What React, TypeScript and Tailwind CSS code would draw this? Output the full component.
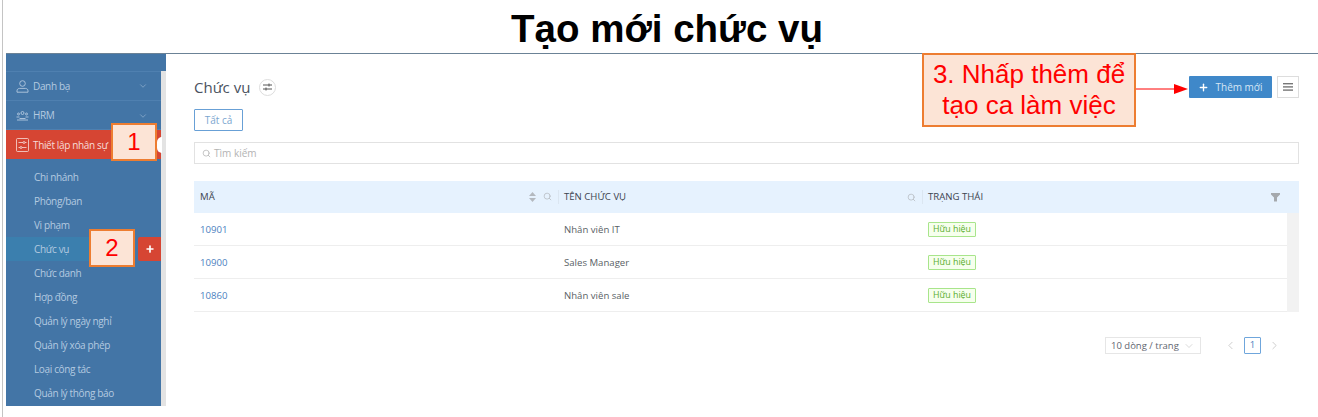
import type { ReactNode } from "react";
import { ChevronDown, ChevronLeft, ChevronRight, Plus, Search } from "lucide-react";

const subItems = ["Chi nhánh", "Phòng/ban", "Vi phạm", "Chức vụ", "Chức danh", "Hợp đồng", "Quản lý ngày nghỉ", "Quản lý xóa phép", "Loại công tác", "Quản lý thông báo"];

const rows = [
  { ma: "10901", ten: "Nhân viên IT" },
  { ma: "10900", ten: "Sales Manager" },
  { ma: "10860", ten: "Nhân viên sale" },
];

const PersonIcon = () => (
  <svg width="13" height="13" viewBox="0 0 13 13" fill="none" stroke="currentColor" strokeWidth="0.9" className="mr-[4px] shrink-0">
    <circle cx="6.5" cy="3.5" r="2.8" />
    <path d="M1 12.2v-1.4c0-1.5 1.3-2.4 2.6-2.4h5.8c1.3 0 2.6.9 2.6 2.4v1.4z" />
  </svg>
);

const GroupIcon = () => (
  <svg width="13" height="13" viewBox="0 0 13 13" fill="none" stroke="currentColor" strokeWidth="0.9" className="mr-[4px] shrink-0">
    <circle cx="6.5" cy="4" r="1.5" />
    <circle cx="2.5" cy="5" r="1" />
    <circle cx="10.5" cy="5" r="1" />
    <path d="M3.5 9.5h6M.5 8h3M9.5 8h3M1 11h11" />
  </svg>
);

const SettingIcon = () => (
  <svg width="13" height="14" viewBox="0 0 13 14" fill="none" stroke="currentColor" strokeWidth="0.8" className="mr-[4px] shrink-0">
    <rect x="0.5" y="0.5" width="12" height="13" rx="1" />
    <path d="M2.5 4.5h8M2.5 9.5h8" />
    <circle cx="8" cy="4.5" r="1" fill="#d64533" />
    <circle cx="5" cy="9.5" r="1" fill="#d64533" />
  </svg>
);

const Sidebar = () => (
  <aside className="w-[160px] h-[352px] shrink-0 flex flex-col bg-[#4375a6]">
    <div className="h-[17px] shrink-0"></div>
    <div className="flex flex-1 min-h-0">
      <div className="w-[155px] flex flex-col text-[10px] tracking-[-0.35px] text-[#b4cae0]">
        <div className="h-[30px] flex items-center pl-[10px] pr-[13px] pt-[1px] border-y border-[#4f80b0]">
          <PersonIcon />
          <span className="flex-1">Danh bạ</span>
          <ChevronDown size={10} strokeWidth={1.2} />
        </div>
        <div className="h-[30px] flex items-center pl-[10px] pr-[13px] pt-[1px] border-b border-[#4f80b0]">
          <GroupIcon />
          <span className="flex-1">HRM</span>
          <ChevronDown size={10} strokeWidth={1.2} />
        </div>
        <div className="h-[29px] flex items-center pl-[10px] pt-[1px] bg-[#d64533] text-[#f6dcd8]">
          <SettingIcon />
          <span>Thiết lập nhân sự</span>
        </div>
        <div className="pt-[6px]">
          {subItems.map((item) => (
            <div key={item} className="h-[24.1px] flex items-center justify-between">
              {item === "Chức vụ" ? (
                <>
                  <div className="w-[85px] h-full flex items-center pl-[28px] bg-[#3b7fae]">{item}</div>
                  <div className="w-[23px] h-full flex items-center justify-center bg-[#d64533] rounded-l-[2px]">
                    <Plus size={10} strokeWidth={4} className="text-white" />
                  </div>
                </>
              ) : (
                <span className="pl-[28px]">{item}</span>
              )}
            </div>
          ))}
        </div>
      </div>
      <div className="w-[5px] bg-[#e3e3e3]"></div>
    </div>
  </aside>
);

const Content = () => (
  <main className="flex-1 pl-[28px] pr-[19px] pt-[22px] text-[9.6px] text-[#5a5f66]">
    <div className="flex items-center justify-between h-[22px]">
      <div className="flex items-center gap-[9px]">
        <h2 className="text-[15px] text-[#4a5260]">Chức vụ</h2>
        <span className="w-[17px] h-[17px] rounded-full border border-[#dddddd] flex items-center justify-center">
          <svg width="9" height="8" viewBox="0 0 9 8" fill="none" stroke="#555555" strokeWidth="1">
            <path d="M0 2h9M0 6h9M6 .5v3M3 4.5v3" />
          </svg>
        </span>
      </div>
      <div className="flex items-center gap-[5px]">
        <button className="w-[83px] h-[22px] bg-[#3f88c9] text-[#d6e6f5] rounded-[1px] flex items-center justify-center gap-[6px] text-[10px]">
          <Plus size={11} strokeWidth={3} className="text-white" />
          Thêm mới
        </button>
        <button className="w-[22px] h-[22px] border border-[#dddddd] flex items-center justify-center">
          <svg width="10" height="8" viewBox="0 0 10 8" fill="#777777">
            <rect y="0" width="10" height="1.4" />
            <rect y="3.2" width="10" height="1.4" />
            <rect y="6.4" width="10" height="1.4" />
          </svg>
        </button>
      </div>
    </div>
    <button className="mt-[11px] w-[49px] h-[22px] border border-[#68a0d6] rounded-[1px] text-[10px] text-[#7ba6cf] block">Tất cả</button>
    <div className="mt-[11px] h-[22px] border border-[#e2e2e2] flex items-center pl-[7px] gap-[3px] text-[10px] text-[#b3b3b3]">
      <Search size={9} />
      Tìm kiếm
    </div>
    <table className="mt-[17px] w-full table-fixed border-separate border-spacing-0">
      <colgroup>
        <col className="w-[364px]" />
        <col className="w-[364px]" />
        <col />
        <col className="w-[12px]" />
      </colgroup>
      <thead>
        <tr className="h-[32px] bg-[#e6f2fe] text-[#3c4450] text-left">
          <th className="pl-[6px] font-normal">
            <div className="flex items-center justify-between pr-[6px]">
              MÃ
              <span className="flex items-center gap-[7px] text-[#b4b9bf]">
                <svg width="7" height="10" viewBox="0 0 7 10" fill="#b4b9bf">
                  <polygon points="3.5,0 7,4 0,4" />
                  <polygon points="0,6 7,6 3.5,10" />
                </svg>
                <Search size={9} />
              </span>
            </div>
          </th>
          <th className="font-normal">
            <div className="h-[14px] flex items-center justify-between border-l border-[#dbe6f1] pl-[5px] pr-[6px]">
              TÊN CHỨC VỤ
              <Search size={9} className="text-[#b4b9bf]" />
            </div>
          </th>
          <th colSpan={2} className="font-normal">
            <div className="h-[14px] flex items-center justify-between border-l border-[#dbe6f1] pl-[5px] pr-[19px]">
              TRẠNG THÁI
              <svg width="9" height="9" viewBox="0 0 9 9" fill="#a5a9ad">
                <polygon points="0,0 9,0 9,1.5 6,4.5 6,8.5 3,8.5 3,4.5 0,1.5" />
              </svg>
            </div>
          </th>
        </tr>
      </thead>
      <tbody>
        {rows.map((row, i) => (
          <tr key={row.ma} className="h-[33px]">
            <td className="pl-[6px] pt-[2px] text-[#4b7fc0] border-b border-[#eeeeee]">{row.ma}</td>
            <td className="pl-[6px] pt-[2px] border-b border-[#eeeeee]">{row.ten}</td>
            <td className="pl-[6px] border-b border-[#eeeeee]">
              <span className="inline-block h-[15px] px-[4px] border border-[#a8e58b] bg-[#f6ffed] text-[#58ad2c] text-[8.8px] leading-[13px] rounded-[1px]">Hữu hiệu</span>
            </td>
            {i === 0 && <td rowSpan={3} className="bg-[#f2f2f2]"></td>}
          </tr>
        ))}
      </tbody>
    </table>
    <div className="mt-[25px] flex items-center justify-end">
      <div className="w-[96px] h-[17px] border border-[#e6e6e6] flex items-center justify-between pl-[5px] pr-[5px] pt-[1px] text-[9.5px] text-[#5f6670]">
        10 dòng / trang
        <ChevronDown size={12} strokeWidth={1} className="text-[#b5b5b5]" />
      </div>
      <ChevronLeft size={13} strokeWidth={1.2} className="ml-[23px] text-[#b5b5b5]" />
      <span className="ml-[7px] w-[17px] h-[17px] border border-[#6fa6dc] rounded-[1px] flex items-center justify-center text-[#4b7fc0]">1</span>
      <ChevronRight size={13} strokeWidth={1.2} className="ml-[7px] mr-[18px] text-[#b5b5b5]" />
    </div>
  </main>
);

const Callout = ({ className, children }: { className: string; children: ReactNode }) => (
  <div className={`absolute z-10 flex items-center justify-center text-center bg-[#fce4d6] border-2 border-[#ed7d31] text-[#ff0000] font-['Liberation_Sans',sans-serif] ${className}`}>
    {children}
  </div>
);

export default function App() {
  return (
    <div className="relative w-[1318px] h-[417px] overflow-hidden bg-white font-['Open_Sans',sans-serif]">
      <div className="absolute left-[2px] top-0 bottom-0 w-px bg-[#c4c4c4]"></div>
      <h1 className="h-[53px] pl-[16px] text-center text-[38.5px] leading-[58px] font-bold text-black font-['Liberation_Sans',sans-serif]">Tạo mới chức vụ</h1>
      <div className="ml-[6px] flex border-t border-[#6b8296]">
        <Sidebar />
        <Content />
      </div>

      <Callout className="left-[111px] top-[123px] w-[46px] h-[38px] text-[24px]">1</Callout>
      <Callout className="left-[89px] top-[229px] w-[46px] h-[38px] text-[24px]">2</Callout>
      <Callout className="left-[922px] top-[53px] w-[214px] h-[74px] text-[26px] leading-[31px]">
        3. Nhấp thêm để<br />tạo ca làm việc
      </Callout>
      <svg className="absolute left-[1136px] top-[83px]" width="52" height="12" viewBox="0 0 52 12">
        <line x1="0" y1="6" x2="40" y2="6" stroke="#ff0000" strokeWidth="1" />
        <polygon points="38,1 52,6 38,11" fill="#ff0000" />
      </svg>
      <div className="absolute left-[157px] top-[137px] w-[5px] h-[16px] bg-white rounded-l-full"></div>
    </div>
  );
}
